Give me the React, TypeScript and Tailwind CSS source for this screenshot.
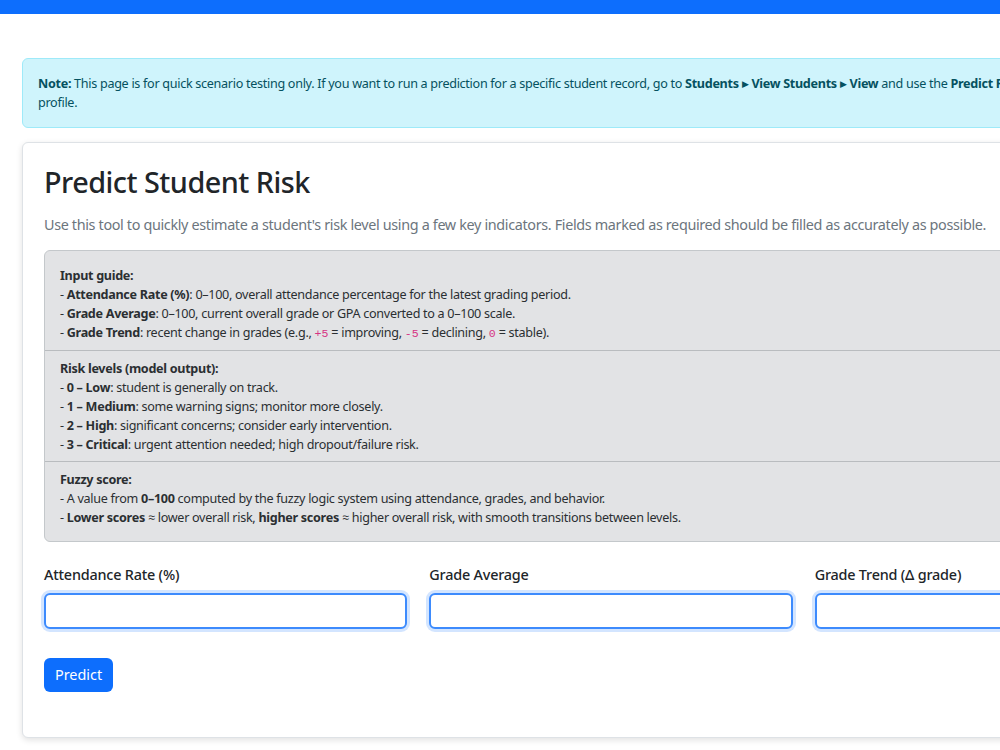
const font = { fontFamily: '"Noto Sans", "Open Sans", sans-serif' };

function Code({ children }: { children: string }) {
  return <code className="font-['Liberation_Mono',monospace] text-[11.5px] tracking-normal text-[#d63384]">{children}</code>;
}

function GuideLine({ label, children }: { label?: string; children: React.ReactNode }) {
  return (
    <div>
      - {label && <strong className="font-bold">{label}</strong>}
      {children}
    </div>
  );
}

function Field({ label }: { label: string }) {
  return (
    <div className="flex flex-col">
      <label className="mb-[8px] text-[14.4px] font-medium leading-[21px] tracking-[-0.2px] text-[#212529]">{label}</label>
      <input
        type="text"
        className="h-[36px] w-full rounded-[6px] border-2 border-[#3d8bfd] bg-white px-3 text-[14.4px] outline-none shadow-[0_0_0_3px_rgba(13,110,253,0.18)]"
      />
    </div>
  );
}

function Arrow() {
  return <span className="mx-[3px] text-[9px] align-[1px] font-normal">▶</span>;
}

export default function App() {
  return (
    <div className="min-h-screen overflow-hidden bg-white text-[#212529]" style={font}>
      <div className="h-[14px] w-full bg-[#0d6efd]" />

      <main className="w-[1222px] px-[22px] pt-[44px]">
        <div className="mb-[14px] rounded-[6px] border border-[#9eeaf9] bg-[#cff4fc] px-[15px] py-[15px] text-[12.6px] leading-[19px] tracking-[-0.3px] text-[#055160]">
          <strong className="font-bold">Note:</strong> This page is for quick scenario testing only. If you want to run a
          prediction for a specific student record, go to <strong className="font-bold">Students</strong>
          <Arrow />
          <strong className="font-bold">View Students</strong>
          <Arrow />
          <strong className="font-bold">View</strong> and use the <strong className="font-bold">Predict Risk</strong>{' '}
          button on the student's profile.
        </div>

        <div className="rounded-[6px] border border-[#dee2e6] bg-white px-[21px] pb-[45px] pt-[22px] shadow-[0_2px_6px_rgba(0,0,0,0.12)]">
          <h2 className="mb-[14px] text-[28.8px] font-medium leading-[1.2] tracking-[-0.5px] text-[#212529]">
            Predict Student Risk
          </h2>
          <p className="mb-[14px] text-[14.4px] leading-[22px] tracking-[-0.35px] text-[#6c757d]">
            Use this tool to quickly estimate a student's risk level using a few key indicators. Fields marked as required
            should be filled as accurately as possible.
          </p>

          <div className="mb-[22px] rounded-[6px] border border-[#c4c8cb] bg-[#e2e3e5] px-[15px] pb-[14px] pt-[15px] text-[12.6px] leading-[19px] tracking-[-0.3px] text-[#2b2f32]">
            <div className="font-bold">Input guide:</div>
            <GuideLine label="Attendance Rate (%)">: 0–100, overall attendance percentage for the latest grading period.</GuideLine>
            <GuideLine label="Grade Average">: 0–100, current overall grade or GPA converted to a 0–100 scale.</GuideLine>
            <GuideLine label="Grade Trend">
              : recent change in grades (e.g., <Code>+5</Code> = improving, <Code>-5</Code> = declining, <Code>0</Code> = stable).
            </GuideLine>

            <hr className="-mx-[15px] mb-[8px] mt-[7px] border-t border-[#b9bcbf]" />

            <div className="font-bold">Risk levels (model output):</div>
            <GuideLine label="0 – Low">: student is generally on track.</GuideLine>
            <GuideLine label="1 – Medium">: some warning signs; monitor more closely.</GuideLine>
            <GuideLine label="2 – High">: significant concerns; consider early intervention.</GuideLine>
            <GuideLine label="3 – Critical">: urgent attention needed; high dropout/failure risk.</GuideLine>

            <hr className="-mx-[15px] mb-[8px] mt-[7px] border-t border-[#b9bcbf]" />

            <div className="font-bold">Fuzzy score:</div>
            <div>
              - A value from <strong className="font-bold">0–100</strong> computed by the fuzzy logic system using attendance,
              grades, and behavior.
            </div>
            <div>
              - <strong className="font-bold">Lower scores</strong> ≈ lower overall risk,{' '}
              <strong className="font-bold">higher scores</strong> ≈ higher overall risk, with smooth transitions between levels.
            </div>
          </div>

          <form className="flex flex-col" onSubmit={(e) => e.preventDefault()}>
            <div className="grid grid-cols-3 gap-x-[22px]">
              <Field label="Attendance Rate (%)" />
              <Field label="Grade Average" />
              <Field label="Grade Trend (Δ grade)" />
            </div>
            <div className="mt-[29px]">
              <button type="submit" className="h-[34px] rounded-[6px] bg-[#0d6efd] px-[11px] text-[14.4px] text-white">
                Predict
              </button>
            </div>
          </form>
        </div>
      </main>
    </div>
  );
}
